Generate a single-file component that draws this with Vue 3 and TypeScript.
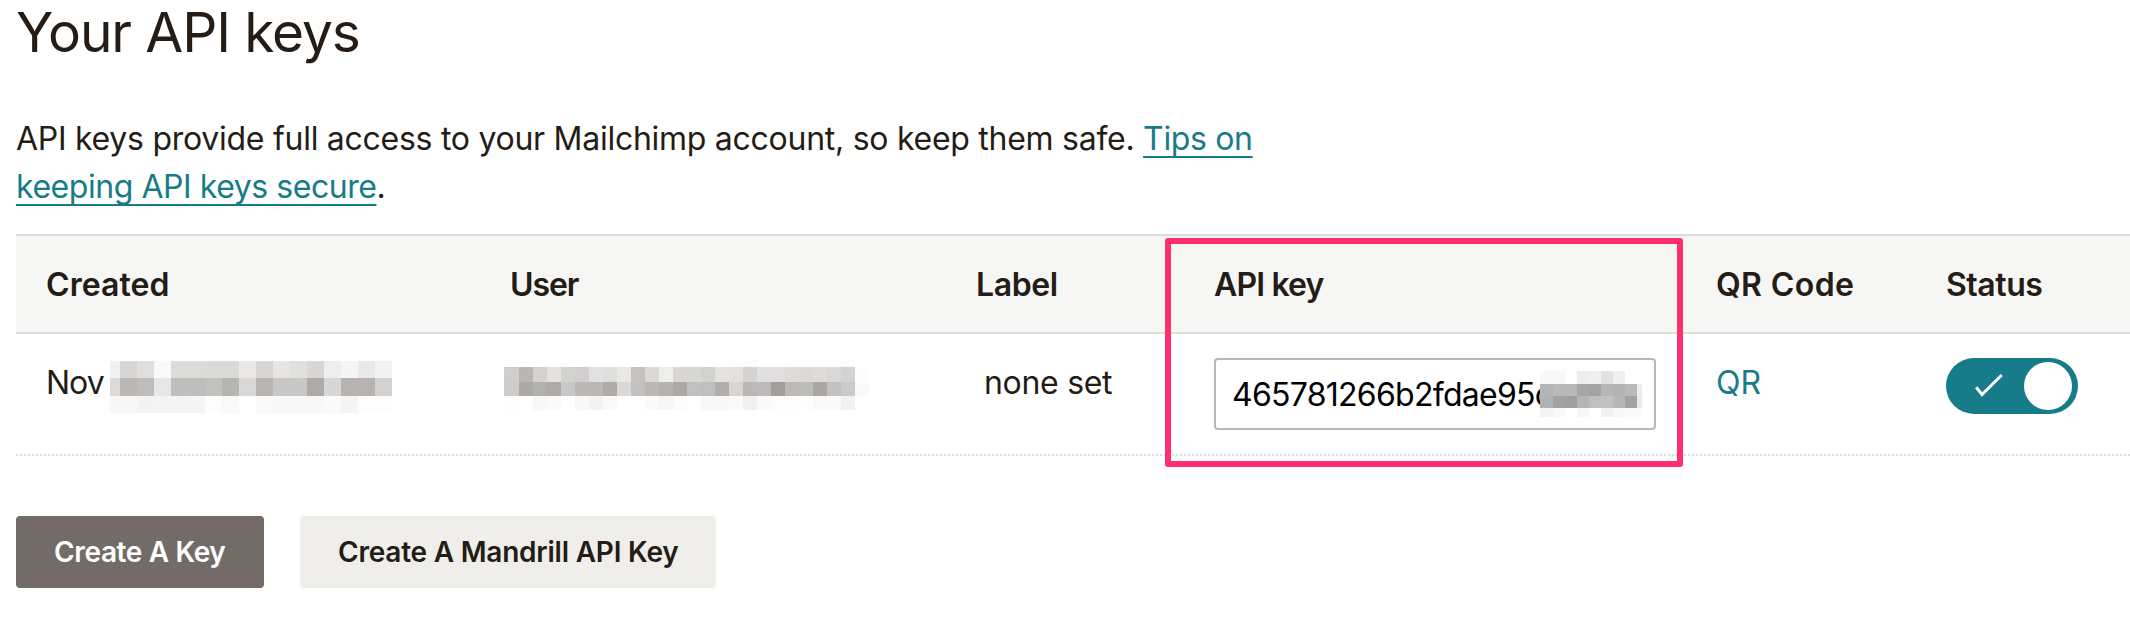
<script setup lang="ts">
import { ref } from 'vue'

interface MosaicRow {
  y: number
  h: number
  cells: string[]
}
interface Mosaic {
  width: number
  height: number
  edges: number[]
  rows: MosaicRow[]
}

const split = (s: string): string[] => s.split(' ').map((c) => `#${c}`)
const grid = (first: number, cell: number, count: number): number[] => [
  0,
  ...Array.from({ length: count }, (_, i) => first + i * cell),
]

const createdMosaic: Mosaic = {
  width: 282,
  height: 52,
  edges: grid(9.5, 17.02, 17),
  rows: [
    { y: 0, h: 17, cells: split('f1f1f1 d8d7d6 e0dfdd fafafa dbdbda dbdbda dadad9 dadad9 eae9e7 d8d7d5 e7e6e4 e1e0de d8d7d6 eeeeee f5f5f5 e9e9e9 f3f3f3') },
    { y: 17, h: 17.5, cells: split('dbdbda bcb7b4 bebdb9 e7e7e7 bfbebd bfbebd c3c2c0 b6b5b1 d9d8d7 bab5b2 c9c8c6 c8c8c6 aeaaa7 d8d7d6 b8b3b0 b8b3b0 d3d2d0') },
    { y: 34.5, h: 17, cells: split('f7f7f5 f7f7f5 f3f3f3 f4f4f4 f4f4f4 f5f5f5 fdfdfb f9f9f9 ffffff fafafa f8f8f8 f8f8f8 f8f8f8 fafafa f5f5f5 fdfdfd fdfdfd') },
  ],
}

const userMosaic: Mosaic = {
  width: 366,
  height: 50,
  edges: grid(14.6, 14.02, 26),
  rows: [
    { y: 0, h: 7, cells: split('ffffff ffffff ffffff ffffff ffffff ffffff ffffff ffffff ffffff ffffff ffffff ffffff ffffff ffffff ffffff ffffff fefefe fcfcfc ffffff ffffff ffffff ffffff ffffff fefefe fcfcfc') },
    { y: 7, h: 14.5, cells: split('cfcecd bab6b3 d3d2d1 e3e2e1 d3d2d1 d0cfce e1e0e2 dededd e9e8e7 c6c2c0 dad9d8 eeeeed d8d7d6 d8d7d6 d2d2d0 e4e3e2 e2e1df d4d3d2 e0dfdf e0dfde dddcdb dbdad9 dddcdb d9d8d7 d2d1d3 fcfcfc') },
    { y: 21.5, h: 14, cells: split('cdcccb ada9a6 b0b0ac aeaba8 c8c8c6 bdb8b6 bcb7b5 aeaba9 dad9d8 c2c2c1 bdb8b5 b7b2af aca8a5 c1c1c0 bfbfbd b1aeab d7d6d5 bdb8b4 bdb8b9 a29e9b beb9b6 bdbcbb aaa7a4 c3c2c1 cbcac9 fafaf8') },
    { y: 35.5, h: 14.5, cells: split('fdfdfd ffffff f8f8f8 fafafa ffffff f8f8f8 f3f3f3 f9f9f7 ffffff ffffff fafafa f6f6f6 fcfcfc ffffff f8f8f8 f8f8f8 fafafa f0f0f0 fafafa fdfdfd fdfdfd fefefc fafafa f9f9f9 f2f2f1') },
  ],
}

const keyMosaic: Mosaic = {
  width: 102,
  height: 46,
  edges: [0, 12.5, 24.5, 36.5, 48.5, 60.5, 72.5, 84.5, 96.5, 102],
  rows: [
    { y: 0, h: 13, cells: split('f8f8f8 f8f8f8 ffffff ededed efefef e2e2e2 efefef ffffff ffffff') },
    { y: 13, h: 12, cells: split('b4b4b4 b9b9b9 b9b9b9 a6a6a6 a3a3a3 b6b6b6 b3b3b3 b9b9b9 ececec') },
    { y: 25, h: 12, cells: split('b0b0b0 a2a2a2 9f9f9f b5b5b5 bfbfbf c2c2c2 b7b7b7 a2a2a2 eaeaea') },
    { y: 37, h: 9, cells: split('f4f4f4 f9f9f9 ffffff f8f8f8 ffffff f3f3f3 f8f8f8 fbfbfb fafafa') },
  ],
}

const apiKey = ref('465781266b2fdae95c')
const enabled = ref(true)
</script>

<template>
  <main class="page">
    <h1 class="title">Your API keys</h1>
    <p class="intro">
      API keys provide full access to your Mailchimp account, so keep them safe.
      <a class="link tips">Tips on</a><br /><a class="link secure">keeping API keys secure</a>.
    </p>

    <section class="table">
      <div class="row head">
        <div class="cell created">Created</div>
        <div class="cell user">User</div>
        <div class="cell name">Label</div>
        <div class="cell key">API key</div>
        <div class="cell code">QR Code</div>
        <div class="cell status">Status</div>
      </div>
      <div class="row body">
        <div class="cell date">
          <span class="month">Nov</span>
          <svg class="mosaic" :width="createdMosaic.width" :height="createdMosaic.height" shape-rendering="crispEdges">
            <template v-for="(r, ri) in createdMosaic.rows" :key="ri">
              <rect v-for="(c, i) in r.cells" :key="i" :x="createdMosaic.edges[i]" :y="r.y" :width="createdMosaic.edges[i + 1] - createdMosaic.edges[i]" :height="r.h" :fill="c" />
            </template>
          </svg>
        </div>
        <div class="cell person">
          <svg class="mosaic" :width="userMosaic.width" :height="userMosaic.height" shape-rendering="crispEdges">
            <template v-for="(r, ri) in userMosaic.rows" :key="ri">
              <rect v-for="(c, i) in r.cells" :key="i" :x="userMosaic.edges[i]" :y="r.y" :width="userMosaic.edges[i + 1] - userMosaic.edges[i]" :height="r.h" :fill="c" />
            </template>
          </svg>
        </div>
        <div class="cell label">none set</div>
        <div class="cell field">
          <input v-model="apiKey" class="input" type="text" readonly />
          <svg class="mask" :width="keyMosaic.width" :height="keyMosaic.height" shape-rendering="crispEdges">
            <template v-for="(r, ri) in keyMosaic.rows" :key="ri">
              <rect v-for="(c, i) in r.cells" :key="i" :x="keyMosaic.edges[i]" :y="r.y" :width="keyMosaic.edges[i + 1] - keyMosaic.edges[i]" :height="r.h" :fill="c" />
            </template>
          </svg>
        </div>
        <div class="cell link-cell"><a class="qr">QR</a></div>
        <div class="cell">
          <button class="toggle" type="button" role="switch" :aria-checked="enabled" @click="enabled = !enabled">
            <svg class="check" width="32" height="28" viewBox="0 0 32 28">
              <path d="M4.2 15.3 L10 22.5 L29.8 3" fill="none" stroke="#fff" stroke-width="3" />
            </svg>
            <span class="knob"></span>
          </button>
        </div>
      </div>
      <div class="highlight"></div>
    </section>

    <div class="actions">
      <button class="btn primary" type="button">Create A Key</button>
      <button class="btn secondary" type="button">Create A Mandrill API Key</button>
    </div>
  </main>
</template>

<style>
body {
  background: #fff;
}
</style>

<style scoped>
.page {
  box-sizing: border-box;
  height: 636px;
  padding-left: 16px;
  color: #241c15;
  font-family: Inter, "Liberation Sans", sans-serif;
  font-size: 32px;
  line-height: 48px;
}
.title {
  margin: 0 0 51px;
  font-size: 55px;
  font-weight: 400;
  line-height: 64px;
  letter-spacing: -1.1px;
}
.intro {
  margin: 0 0 23px;
  letter-spacing: -0.27px;
  white-space: nowrap;
}
.link {
  color: #177c89;
  text-decoration: underline;
  text-decoration-thickness: 2px;
  text-underline-offset: 6px;
  text-decoration-skip-ink: none;
}
.tips { letter-spacing: -0.35px; }
.secure { letter-spacing: -0.45px; }

.table { position: relative; }
.row {
  display: grid;
  grid-template-columns: 464px 466px 238px 502px 230px 214px;
}
.cell { padding: 24px 0 24px 30px; height: 48px; white-space: nowrap; }
.head {
  background: #f6f6f4;
  border-top: 2px solid #dcdcdc;
  border-bottom: 2px solid #dcdcdc;
  font-weight: 600;
}
.head .cell { padding: 25px 0 23px 30px; }
.created { letter-spacing: 0.07px; }
.user { letter-spacing: -1.1px; }
.name { letter-spacing: -0.4px; }
.key { letter-spacing: -0.85px; }
.code { letter-spacing: 0.38px; }
.status { letter-spacing: -0.45px; }
.body .cell { height: 72px; }
.body {
  padding-bottom: 2px;
  background: repeating-linear-gradient(90deg, #dcdcdc 0 2px, transparent 2px 4px) left bottom / 100% 2px no-repeat;
}
.date { display: flex; align-items: flex-start; }
.month { width: 64px; padding-top: 1px; letter-spacing: -1px; }
.mosaic { display: block; flex: none; }
.date .mosaic { margin-top: 3px; }
.body .person { padding-left: 24px; padding-top: 26px; height: 70px; }
.body .label { padding-left: 38px; padding-top: 25px; height: 71px; letter-spacing: -0.3px; }
.body .link-cell { padding-top: 25px; height: 71px; }
.field { position: relative; }
.input {
  box-sizing: border-box;
  display: block;
  width: 442px;
  height: 72px;
  margin: 0;
  padding: 1px 16px 0;
  border: 2px solid #bdb7b4;
  border-radius: 4px;
  background: #fff;
  color: #000;
  font: inherit;
  letter-spacing: -0.73px;
  outline: none;
}
.mask {
  position: absolute;
  left: 356px;
  top: 37px;
}
.qr { color: #177c89; }
.toggle {
  display: flex;
  align-items: center;
  justify-content: space-between;
  width: 132px;
  height: 56px;
  padding: 0 6px 0 26px;
  border: 0;
  border-radius: 28px;
  background: #177c89;
}
.knob {
  width: 48px;
  height: 48px;
  border-radius: 50%;
  background: #fff;
}
.highlight {
  position: absolute;
  left: 1149px;
  top: 4px;
  box-sizing: border-box;
  width: 518px;
  height: 229px;
  border: 6px solid #ff2e6c;
  border-radius: 3px;
}
.actions {
  display: flex;
  gap: 36px;
  margin-top: 60px;
}
.btn {
  height: 72px;
  padding: 0 0 0 38px;
  border: 0;
  border-radius: 4px;
  font-family: inherit;
  font-size: 28px;
  font-weight: 600;
  line-height: 72px;
  text-align: left;
  white-space: nowrap;
}
.primary { width: 248px; background: #736b68; color: #fff; letter-spacing: -0.36px; }
.secondary { width: 416px; background: #efeeea; color: #241c15; letter-spacing: -0.22px; }
</style>
